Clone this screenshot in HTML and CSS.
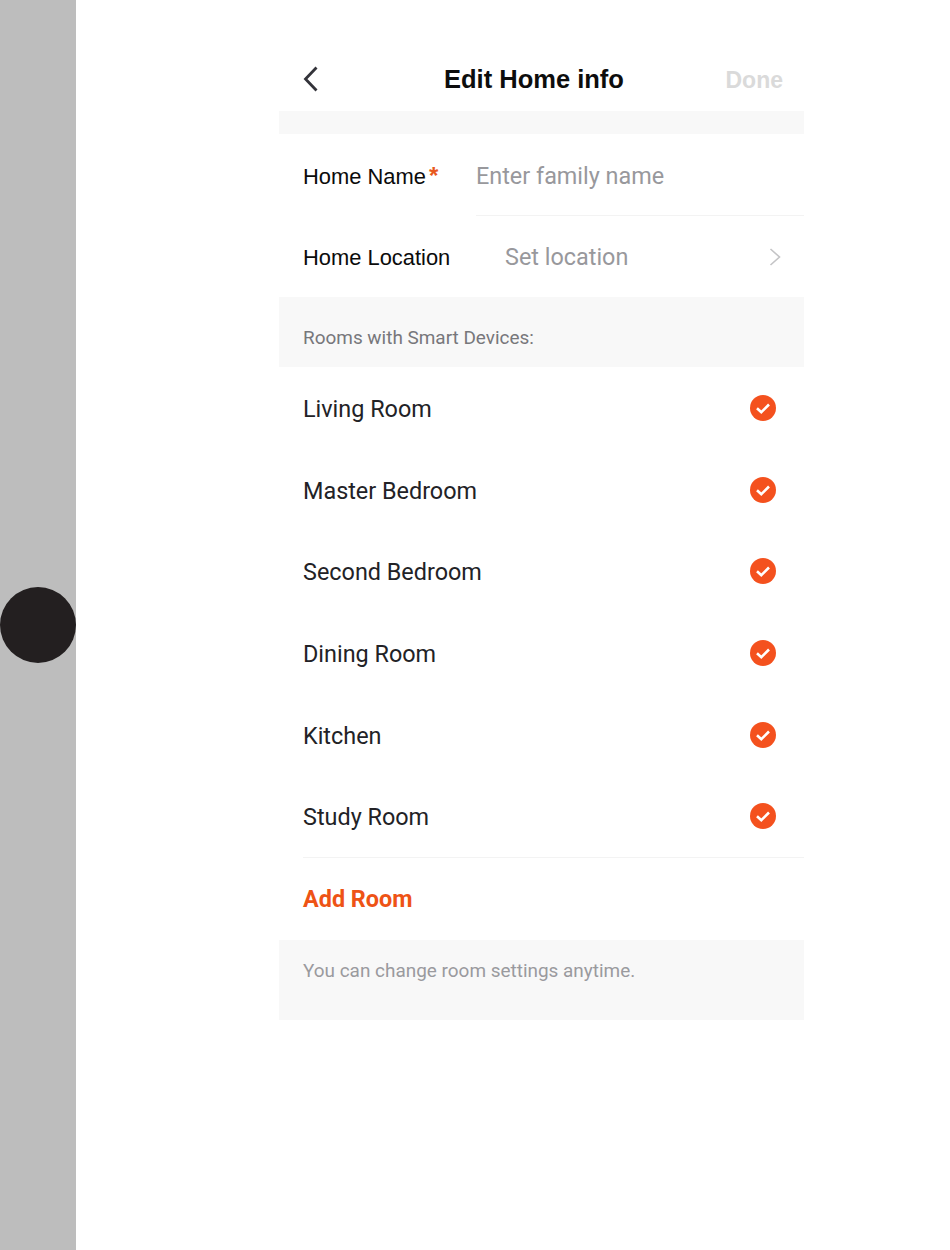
FILE: index.html
```html
<!DOCTYPE html>
<html lang="en">
<head>
<meta charset="utf-8">
<title>Edit Home info</title>
<link rel="stylesheet" href="styles.css">
</head>
<body>
<div class="page">
  <aside class="rail"><div class="dot"></div></aside>
  <main class="phone">
    <header class="nav">
      <svg class="back" width="16" height="26" viewBox="0 0 16 26"><path d="M13.5 1.5 2.5 13l11 11.5" fill="none" stroke="#33333a" stroke-width="2.8"/></svg>
      <h1 class="title">Edit Home info</h1>
      <span class="done">Done</span>
    </header>
    <div class="gap-top"></div>
    <section class="form">
      <div class="field field-name">
        <span class="label">Home Name<span class="req">*</span></span>
        <span class="hint hint-name">Enter family name</span>
      </div>
      <div class="field field-loc">
        <span class="label">Home Location</span>
        <span class="hint hint-loc">Set location</span>
        <svg class="chev" width="12" height="20" viewBox="0 0 12 20"><path d="M1.5 2 10.5 10l-9 8" fill="none" stroke="#c4c4c6" stroke-width="1.6"/></svg>
      </div>
    </section>
    <div class="band band-rooms">Rooms with Smart Devices:</div>
    <ul class="rooms">
      <li class="room">Living Room<svg class="tick" viewBox="0 0 26 26"><circle cx="13" cy="13" r="13" fill="#f4511e"/><path d="m7 13.2 4.3 4 7.7-7.7" fill="none" stroke="#fff" stroke-width="2.6"/></svg></li>
      <li class="room">Master Bedroom<svg class="tick" viewBox="0 0 26 26"><circle cx="13" cy="13" r="13" fill="#f4511e"/><path d="m7 13.2 4.3 4 7.7-7.7" fill="none" stroke="#fff" stroke-width="2.6"/></svg></li>
      <li class="room">Second Bedroom<svg class="tick" viewBox="0 0 26 26"><circle cx="13" cy="13" r="13" fill="#f4511e"/><path d="m7 13.2 4.3 4 7.7-7.7" fill="none" stroke="#fff" stroke-width="2.6"/></svg></li>
      <li class="room">Dining Room<svg class="tick" viewBox="0 0 26 26"><circle cx="13" cy="13" r="13" fill="#f4511e"/><path d="m7 13.2 4.3 4 7.7-7.7" fill="none" stroke="#fff" stroke-width="2.6"/></svg></li>
      <li class="room">Kitchen<svg class="tick" viewBox="0 0 26 26"><circle cx="13" cy="13" r="13" fill="#f4511e"/><path d="m7 13.2 4.3 4 7.7-7.7" fill="none" stroke="#fff" stroke-width="2.6"/></svg></li>
      <li class="room">Study Room<svg class="tick" viewBox="0 0 26 26"><circle cx="13" cy="13" r="13" fill="#f4511e"/><path d="m7 13.2 4.3 4 7.7-7.7" fill="none" stroke="#fff" stroke-width="2.6"/></svg></li>
    </ul>
    <div class="add-wrap"><span class="add">Add Room</span></div>
    <div class="band band-note">You can change room settings anytime.</div>
  </main>
</div>
</body>
</html>
```

FILE: styles.css
```css
* { box-sizing: border-box; }
html, body { margin: 0; padding: 0; background: #fff; }
.page { display: flex; width: 950px; height: 1250px; overflow: hidden; }
.rail { width: 76px; flex: none; background: #bdbdbd; display: flex; align-items: center; }
.dot { width: 76px; height: 76px; flex: none; border-radius: 50%; background: #231f20; }
.phone { width: 525px; flex: none; margin-left: 203px; font-family: Roboto, sans-serif; }
.nav { height: 111px; display: flex; align-items: center; padding: 47px 21px 0 24px; position: relative; }
.back { flex: none; }
.title { position: absolute; left: 165px; top: 62px; margin: 0; font: bold 25.5px/35px "Liberation Sans", sans-serif; color: #0d0d0d; white-space: nowrap; }
.done { margin-left: auto; font: bold 23px/30px "Liberation Sans", sans-serif; color: #dadada; margin-top: 1px; }
.gap-top { height: 23px; background: #f8f8f8; }
.field { display: flex; align-items: center; padding-left: 24px; height: 81.5px; position: relative; }
.label { font: 21.9px/30px "Liberation Sans", sans-serif; color: #0b0b0b; white-space: nowrap; margin-top: 3px; }
.req { color: #e8591e; margin-left: 3px; font-size: 24px; font-weight: 700; }
.hint { font-size: 23.4px; line-height: 30px; color: #98989c; white-space: nowrap; }
.hint-name { position: absolute; left: 197px; top: 27px; }
.field-name::after { content: ""; position: absolute; left: 197px; right: 0; bottom: 0; height: 1px; background: #f3f3f3; }
.hint-loc { position: absolute; left: 226px; top: 26px; }
.chev { position: absolute; right: 23px; top: 31px; }
.band { background: #f8f8f8; padding-left: 24px; font-size: 18.95px; }
.band-rooms { height: 70px; padding-top: 27px; line-height: 28px; color: #77777b; }
.band-note { height: 80px; padding-top: 17px; line-height: 28px; color: #9a9a9e; }
.rooms { list-style: none; margin: 0; padding: 0 0 0 24px; }
.room { height: 81.75px; display: flex; align-items: center; justify-content: space-between; padding-right: 28px; font-size: 23.4px; color: #222226; padding-top: 2px; }
.room:last-child { height: 82px; border-bottom: 1px solid #f3f3f3; }
.tick { width: 26px; height: 26px; flex: none; margin-top: -2px; }
.add-wrap { height: 82px; display: flex; align-items: center; padding-left: 24px; }
.add { font-size: 23.4px; font-weight: 700; color: #ee5315; }
```
